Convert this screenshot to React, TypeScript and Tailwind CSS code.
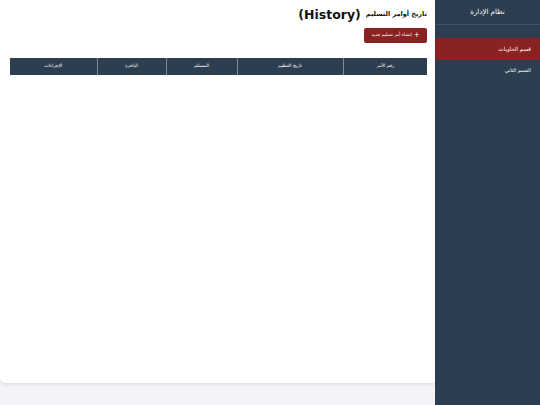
import React from "react";

export default function App() {
  const cols = ["رقم الأمر", "تاريخ التنظيم", "المستلم", "الباخرة", "الإجراءات"];
  const widths = ["w-[84px]", "w-[106px]", "w-[71px]", "w-[69px]", "w-[87px]"];
  return (
    <div
      dir="rtl"
      className="flex h-[405px] w-[540px] bg-[#f4f4f8] overflow-hidden"
      style={{ fontFamily: '"DejaVu Sans", sans-serif' }}
    >
      <aside className="w-[105px] shrink-0 bg-[#2c3e50] text-white">
        <div className="h-[25px] flex items-center justify-center border-b border-[#3e5468] text-[7px]">
          نظام الإدارة
        </div>
        <nav className="mt-[13px] flex flex-col">
          <div className="h-[22px] flex items-center pr-[9px] bg-[#8b2222] text-[5.5px]">قسم الحاويات</div>
          <div className="h-[22px] flex items-center pr-[9px] text-[5px]">القسم الثاني</div>
        </nav>
      </aside>
      <main className="flex-1">
        <div className="h-[383px] bg-white rounded-bl-[5px] shadow-[0_1px_4px_rgba(0,0,0,0.12)] px-[8px] pt-[7px]">
          <h1 className="h-[16px] flex items-center gap-[5px] font-bold text-[#111]">
            <span className="text-[6.5px]">تاريخ أوامر التسليم</span>
            <span className="text-[12.5px]">(History)</span>
          </h1>
          <div className="mt-[5px] flex">
            <button className="w-[63px] h-[15px] bg-[#8b2222] text-white text-[4.5px] rounded-[2px] flex items-center justify-center gap-[2px]">
              <span className="text-[7px] leading-none">+</span>
              <span>إنشاء أمر تسليم جديد</span>
            </button>
          </div>
          <table className="mt-[15px] w-[417px] border-collapse">
            <thead>
              <tr className="bg-[#2c3e50] text-white h-[17px]">
                {cols.map((c, i) => (
                  <th
                    key={c}
                    className={`${widths[i]} text-[4.5px] font-normal border-x border-[#7d8a97] first:border-r-0 last:border-l-0`}
                  >
                    {c}
                  </th>
                ))}
              </tr>
            </thead>
          </table>
        </div>
      </main>
    </div>
  );
}
